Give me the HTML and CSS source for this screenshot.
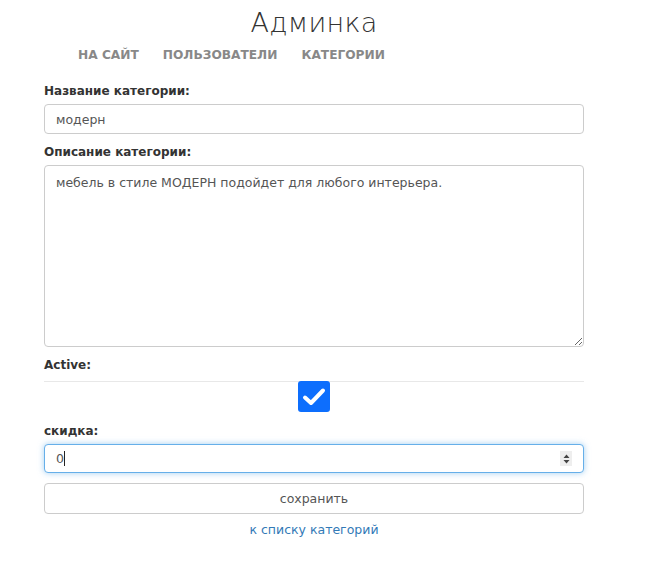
FILE: index.html
```html
<!DOCTYPE html>
<html lang="ru">
<head>
<meta charset="utf-8">
<title>Админка</title>
<link rel="stylesheet" href="styles.css">
</head>
<body>
<div class="page">
  <h1 class="title">Админка</h1>
  <nav class="nav">
    <a href="#">НА САЙТ</a>
    <a href="#">ПОЛЬЗОВАТЕЛИ</a>
    <a href="#">КАТЕГОРИИ</a>
  </nav>
  <form class="form">
    <label class="label">Название категории:</label>
    <input class="field" type="text" value="модерн">
    <label class="label">Описание категории:</label>
    <textarea class="field area">мебель в стиле МОДЕРН подойдет для любого интерьера.</textarea>
    <label class="label">Active:</label>
    <div class="check-row">
      <span class="check"><svg width="24" height="20" viewBox="0 0 24 20"><path d="M3 10.5 L9 16 L21 3.5" fill="none" stroke="#fff" stroke-width="4" stroke-linecap="round" stroke-linejoin="round"/></svg></span>
    </div>
    <label class="label">скидка:</label>
    <div class="num-wrap">
      <input class="field focus" type="number" value="0">
      <span class="caret"></span>
      <span class="spin"><svg width="9" height="12" viewBox="0 0 9 12"><path d="M4.5 1.5 L7.5 5 H1.5 Z M4.5 10.5 L7.5 7 H1.5 Z" fill="#444"/></svg></span>
    </div>
    <button class="btn" type="button">сохранить</button>
    <a class="back" href="#">к списку категорий</a>
  </form>
</div>
</body>
</html>
```
FILE: styles.css
```css
* { box-sizing: border-box; }
body {
  margin: 0;
  background: #fff;
  font-family: "DejaVu Sans", "Noto Sans", sans-serif;
  color: #333;
}
.page {
  width: 540px;
  margin-left: 44px;
  padding-top: 6px;
}
.title {
  margin: 0;
  text-align: center;
  font-weight: 300;
  font-size: 27px;
  line-height: 34px;
  color: #333;
  letter-spacing: 0.3px;
}
.nav {
  display: flex;
  gap: 24px;
  padding-left: 34px;
  margin-top: 4px;
  height: 22px;
  align-items: center;
}
.nav a {
  text-decoration: none;
  color: #888;
  font-weight: bold;
  font-size: 12.2px;
}
.form {
  display: flex;
  flex-direction: column;
  margin-top: 7px;
}
.label {
  font-weight: bold;
  font-size: 12px;
  line-height: 18px;
  color: #333;
  margin-top: 9px;
  margin-bottom: 4px;
}
.field {
  width: 540px;
  height: 30px;
  border: 1px solid #ccc;
  border-radius: 4px;
  padding: 0 11px;
  font-family: inherit;
  font-size: 12.5px;
  color: #555;
  background: #fff;
  outline: none;
}
.area {
  height: 182px;
  padding: 8px 11px;
  resize: vertical;
  line-height: 18px;
}
.check-row {
  border-top: 1px solid #e8e8e8;
  margin-top: 3px;
  display: flex;
  justify-content: center;
  height: 32px;
}
.check {
  width: 32px;
  height: 31px;
  margin-top: -1px;
  background: #0d6efd;
  border-radius: 3px;
  display: flex;
  align-items: center;
  justify-content: center;
}
.num-wrap {
  position: relative;
  height: 29px;
}
.focus {
  border-color: #66afe9;
  box-shadow: 0 0 6px rgba(102, 175, 233, 0.6);
  height: 29px;
}
.focus::-webkit-inner-spin-button,
.focus::-webkit-outer-spin-button {
  -webkit-appearance: none;
  margin: 0;
}
.caret {
  position: absolute;
  left: 20px;
  top: 7px;
  width: 1px;
  height: 15px;
  background: #222;
}
.spin {
  position: absolute;
  right: 12px;
  top: 7px;
  width: 12px;
  height: 15px;
  background: #eee;
  display: flex;
  align-items: center;
  justify-content: center;
}
.btn {
  margin-top: 10px;
  height: 31px;
  width: 540px;
  background: #fff;
  border: 1px solid #ccc;
  border-radius: 4px;
  font-family: inherit;
  font-size: 12.5px;
  color: #555;
}
.back {
  text-align: center;
  margin-top: 8px;
  font-size: 12.5px;
  color: #337ab7;
  text-decoration: none;
}
```
